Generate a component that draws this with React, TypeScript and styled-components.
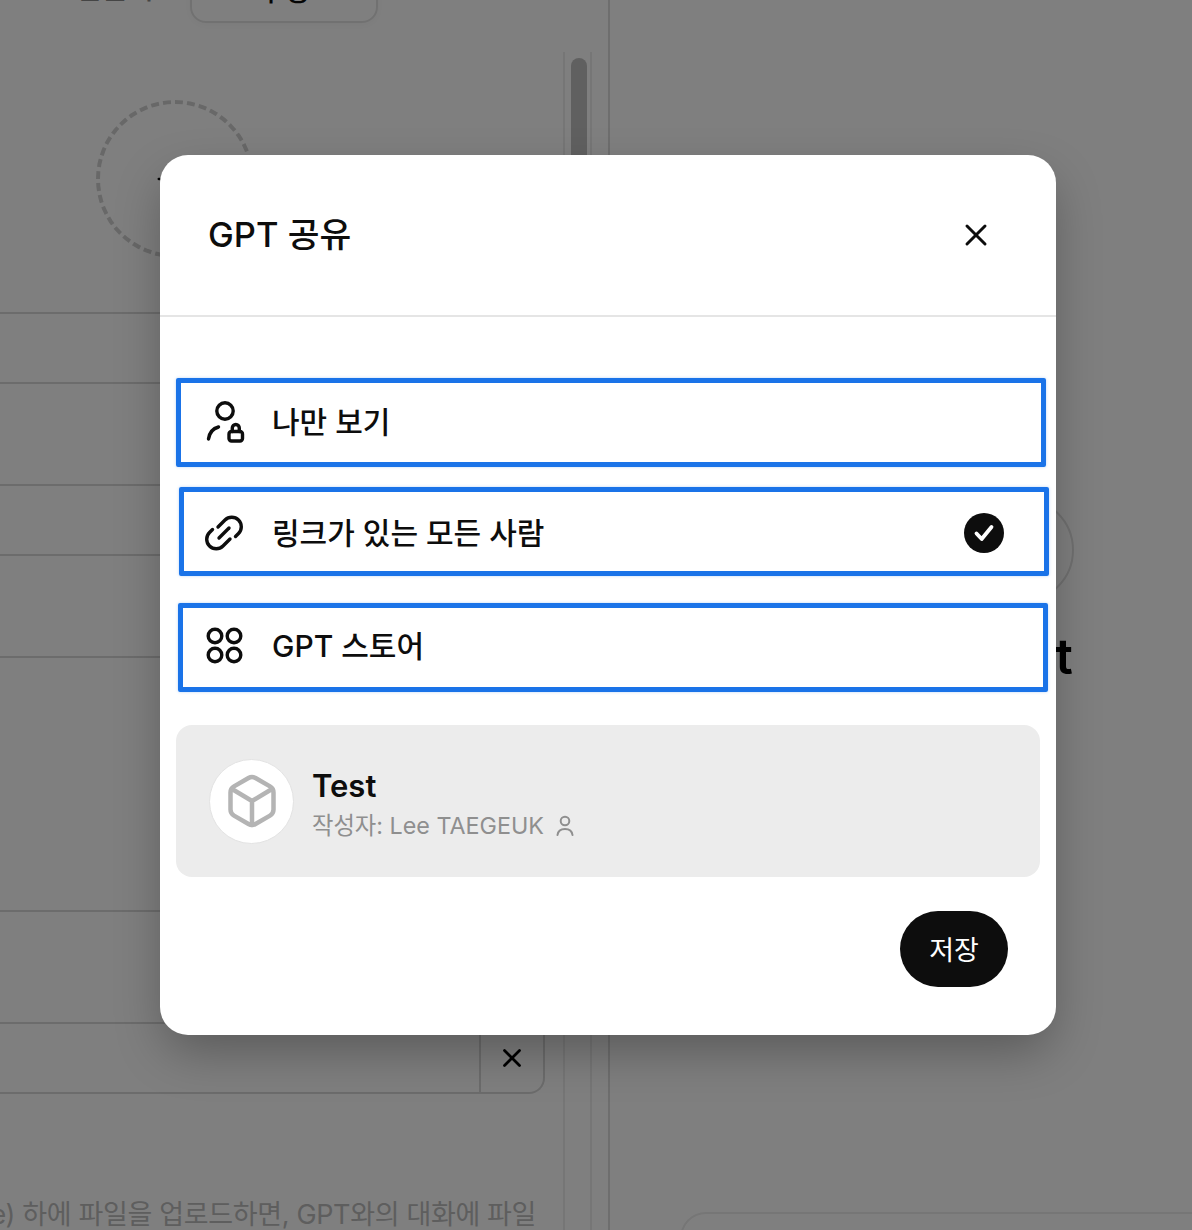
import { Plus, X } from 'lucide-react';
import styled, { createGlobalStyle } from 'styled-components';

const GlobalStyle = createGlobalStyle`
	html, body {
		margin: 0;
		padding: 0;
		background: #fff;
	}
	body {
		font-family: Inter, 'Noto Sans CJK KR', sans-serif;
		color: #0d0d0d;
	}
	* {
		box-sizing: border-box;
	}
`

const PersonLockIcon = () => (
	<svg width='40' height='42' viewBox='0 0 40 42' fill='none' stroke='#0d0d0d' strokeWidth='3.400' strokeLinecap='round'>
		<circle cx='20' cy='10' r='8.200' />
		<path d='M3.500 38c.8-6 4.500-10.500 10-12' />
		<rect x='24' y='30.500' width='13.500' height='9.500' rx='2.500' />
		<path d='M27.300 30.500v-3.500a3.500 3.500 0 0 1 7 0v3.500' />
	</svg>
)

const LinkIcon = () => (
	<svg width='40' height='40' viewBox='1 0 40 40' fill='none' stroke='#0d0d0d' strokeWidth='3.400' strokeLinecap='round'>
		<path d='M14 14l7-7a9.500 9.500 0 0 1 13.500 13.500l-3 3' />
		<path d='M26 26l-7 7a9.500 9.500 0 0 1-13.500-13.500l3-3' />
		<path d='M15 25l10-10' />
	</svg>
)

const StoreIcon = () => (
	<svg width='40' height='40' viewBox='1 1 40 40' fill='none' stroke='#0d0d0d' strokeWidth='3.400'>
		<circle cx='11' cy='11' r='6.800' />
		<circle cx='30' cy='11' r='6.800' />
		<circle cx='11' cy='30' r='6.800' />
		<circle cx='30' cy='30' r='6.800' />
	</svg>
)

const CheckBadge = () => (
	<svg width='40' height='40' viewBox='0 0 40 40'>
		<circle cx='20' cy='20' r='20' fill='#0d0d0d' />
		<path d='M12.500 20.500l5.200 5.500 9.800-12' fill='none' stroke='#fff' strokeWidth='3.800' strokeLinecap='round' strokeLinejoin='round' />
	</svg>
)

const CubeIcon = () => (
	<svg width='48' height='54' viewBox='0 0 48 54' fill='none' stroke='#b4b4b4' strokeWidth='4.500' strokeLinejoin='round' strokeLinecap='round'>
		<path d='M20.500 4l-14.500 8.400q-3.500 2-3.500 6v17.200q0 4 3.500 6l14.500 8.400q3.500 2 7 0l14.500-8.400q3.500-2 3.500-6v-17.200q0-4-3.500-6l-14.500-8.400q-3.500-2-7 0z' />
		<path d='M4 15l20 12 20-12M24 27v24' />
	</svg>
)

const SmallPersonIcon = () => (
	<svg width='18' height='22' viewBox='0 0 18 22' fill='none' stroke='#8f8f8f' strokeWidth='2' strokeLinecap='round'>
		<circle cx='9' cy='6' r='4.300' />
		<path d='M1.500 20c.5-4 3.500-6 7.500-6s7 2 7.500 6' />
	</svg>
)

const App = () => {
	return (
		<Page>
			<GlobalStyle />
			<LeftPanel>
				<TabRow>
					<PlainTab>만들기</PlainTab>
					<ActiveTab>구성</ActiveTab>
				</TabRow>
				<ScrollArea>
					<FormColumn>
						<ImageSlot>
							<Plus size={56} strokeWidth={1} color='#000' />
						</ImageSlot>
						<Field $height={72} $gap={54} />
						<Field $height={72} $gap={100} />
						<Field $height={256} $gap={100} />
						<Field $height={112} $joined />
						<StarterField>
							<RemoveCell>
								<X size={30} strokeWidth={2.200} color='#000' />
							</RemoveCell>
						</StarterField>
						<Caption>(file) 하에 파일을 업로드하면, GPT와의 대화에 파일</Caption>
					</FormColumn>
					<ScrollTrack>
						<ScrollThumb />
					</ScrollTrack>
				</ScrollArea>
			</LeftPanel>
			<RightPanel>
				<PreviewTitle>미리 보기</PreviewTitle>
				<PreviewAvatar />
				<PreviewName>Test</PreviewName>
				<PreviewInput />
			</RightPanel>

			<Overlay>
				<Modal>
					<ModalHeader>
						<ModalTitle>GPT 공유</ModalTitle>
						<CloseButton>
							<X size={36} strokeWidth={2} color='#0d0d0d' />
						</CloseButton>
					</ModalHeader>
					<ModalBody>
						<Option $shift={0} $gap={0} $nudge={-1}>
							<OptionIcon><PersonLockIcon /></OptionIcon>
							<OptionLabel>나만 보기</OptionLabel>
						</Option>
						<Option $shift={3} $gap={20} $nudge={1}>
							<OptionIcon><LinkIcon /></OptionIcon>
							<OptionLabel>링크가 있는 모든 사람</OptionLabel>
							<CheckBadge />
						</Option>
						<Option $shift={2} $gap={27} $nudge={-2}>
							<OptionIcon><StoreIcon /></OptionIcon>
							<OptionLabel>GPT 스토어</OptionLabel>
						</Option>
						<GptCard>
							<GptAvatar><CubeIcon /></GptAvatar>
							<GptInfo>
								<GptName>Test</GptName>
								<GptAuthor>작성자: Lee TAEGEUK <SmallPersonIcon /></GptAuthor>
							</GptInfo>
						</GptCard>
						<ModalFooter>
							<SaveButton>저장</SaveButton>
						</ModalFooter>
					</ModalBody>
				</Modal>
			</Overlay>
		</Page>
	)
}

export default App

const Page = styled.div`
	position: relative;
	width: 1192px;
	height: 1230px;
	display: flex;
	overflow: hidden;
	background: #fff;
`

const LeftPanel = styled.section`
	flex: 0 0 610px;
	height: 1230px;
	border-right: 2px solid #dcdcdc;
	display: flex;
	flex-direction: column;
`

const TabRow = styled.div`
	height: 60px;
	margin-top: -37px;
	display: flex;
	align-items: center;
	padding-left: 40px;
	flex-shrink: 0;
`

const PlainTab = styled.div`
	width: 150px;
	margin-bottom: 8px;
	font-size: 28px;
	line-height: 40px;
	text-align: center;
	font-weight: 500;
	color: #8a8a8a;
`

const ActiveTab = styled(PlainTab)`
	width: 188px;
	height: 60px;
	margin-bottom: 0;
	line-height: 52px;
	color: #0d0d0d;
	border: 2px solid #e3e3e3;
	border-radius: 16px;
	box-shadow: 0 2px 10px rgba(0, 0, 0, 0.04);
`

const ScrollArea = styled.div`
	flex: 1;
	min-height: 0;
	margin-top: 29px;
	display: flex;
	gap: 18px;
	overflow: hidden;
`

const FormColumn = styled.div`
	width: 545px;
	flex-shrink: 0;
	display: flex;
	flex-direction: column;
	padding-top: 48px;
`

const ImageSlot = styled.div`
	width: 158px;
	height: 158px;
	margin-left: 96px;
	border: 4px dashed #d0d0d0;
	border-radius: 50%;
	display: flex;
	align-items: center;
	justify-content: center;
	flex-shrink: 0;
`

const Field = styled.div<{ $height: number; $gap?: number; $joined?: boolean }>`
	height: ${(props) => props.$height}px;
	margin-top: ${(props) => props.$gap ?? 0}px;
	flex-shrink: 0;
	border-top: ${(props) => (props.$joined ? 'none' : '2px solid #d9d9d9')};
	border-bottom: 2px solid #d9d9d9;
	border-right: 2px solid #d9d9d9;
`

const StarterField = styled.div`
	height: 70px;
	flex-shrink: 0;
	display: flex;
	justify-content: flex-end;
	border-bottom: 2px solid #d9d9d9;
	border-right: 2px solid #d9d9d9;
	border-radius: 0 0 16px 0;
`

const RemoveCell = styled.div`
	width: 64px;
	border-left: 2px solid #d9d9d9;
	display: flex;
	align-items: center;
	justify-content: center;
`

const Caption = styled.p`
	margin: 101px 0 0 -41px;
	white-space: nowrap;
	font-size: 27px;
	line-height: 40px;
	letter-spacing: -0.35px;
	color: #bcbcbc;
`

const ScrollTrack = styled.div`
	width: 29px;
	flex-shrink: 0;
	padding: 6px 6px 0;
	border-left: 2px solid #ececec;
	border-right: 2px solid #ececec;
`

const ScrollThumb = styled.div`
	width: 16px;
	height: 400px;
	border-radius: 8px;
	background: #c0c0c0;
`

const RightPanel = styled.section`
	flex: 0 0 822px;
	height: 1230px;
	display: flex;
	flex-direction: column;
	align-items: center;
`

const PreviewTitle = styled.h2`
	margin: -36px 0 0;
	font-size: 32px;
	line-height: 40px;
	font-weight: 500;
	color: #000;
`

const PreviewAvatar = styled.div`
	width: 106px;
	height: 106px;
	margin-top: 493px;
	border: 2px solid #e0e0e0;
	border-radius: 50%;
	flex-shrink: 0;
`

const PreviewName = styled.div`
	margin-top: 26px;
	margin-left: 2px;
	font-size: 49px;
	line-height: 56px;
	font-weight: 600;
	color: #000;
`

const PreviewInput = styled.div`
	width: 682px;
	height: 90px;
	margin-top: 527px;
	border: 2px solid #ececec;
	border-radius: 26px;
	flex-shrink: 0;
`

const Overlay = styled.div`
	position: absolute;
	inset: 0;
	background: rgba(0, 0, 0, 0.5);
	padding: 155px 0 0 160px;
`

const Modal = styled.div`
	width: 896px;
	height: 880px;
	background: #fff;
	border-radius: 28px;
	box-shadow: 0 20px 50px -5px rgba(0, 0, 0, 0.3);
	display: flex;
	flex-direction: column;
`

const ModalHeader = styled.header`
	height: 162px;
	padding: 0 60px 0 48px;
	border-bottom: 2px solid #e5e5e5;
	display: flex;
	align-items: center;
	justify-content: space-between;
	flex-shrink: 0;
`

const ModalTitle = styled.h1`
	margin: 0;
	font-size: 34.500px;
	line-height: 44px;
	font-weight: 500;
	color: #0d0d0d;
`

const CloseButton = styled.button`
	width: 40px;
	height: 40px;
	padding: 0;
	border: none;
	background: none;
	display: flex;
	align-items: center;
	justify-content: center;
`

const ModalBody = styled.div`
	flex: 1;
	padding: 61px 16px 0;
	display: flex;
	flex-direction: column;
`

const Option = styled.div<{ $shift: number; $gap: number; $nudge: number }>`
	width: 870px;
	height: 89px;
	margin-left: ${(props) => props.$shift}px;
	margin-top: ${(props) => props.$gap}px;
	padding: ${(props) => Math.max(props.$nudge * 2, 0)}px 40px ${(props) => Math.max(-props.$nudge * 2, 0)}px ${(props) => 24 - props.$shift}px;
	border: 5px solid #1a73e8;
	border-radius: 2px;
	display: flex;
	align-items: center;
	flex-shrink: 0;
	box-shadow: 0 0 3px rgba(26, 115, 232, 0.3);
`

const OptionIcon = styled.div`
	width: 40px;
	height: 42px;
	display: flex;
	align-items: center;
	justify-content: center;
	margin-right: 27px;
`

const OptionLabel = styled.div`
	flex: 1;
	font-size: 30px;
	line-height: 40px;
	font-weight: 500;
	color: #0d0d0d;
`

const GptCard = styled.div`
	width: 864px;
	height: 152px;
	margin-top: 33px;
	padding-left: 33px;
	border-radius: 16px;
	background: #ececec;
	display: flex;
	align-items: center;
	gap: 18px;
	flex-shrink: 0;
`

const GptAvatar = styled.div`
	width: 85px;
	height: 85px;
	border-radius: 50%;
	background: #fff;
	border: 1px solid #e3e3e3;
	display: flex;
	align-items: center;
	justify-content: center;
	flex-shrink: 0;
`

const GptInfo = styled.div`
	padding-top: 9px;
	display: flex;
	flex-direction: column;
`

const GptName = styled.div`
	margin-bottom: 4px;
	font-size: 31px;
	line-height: 36px;
	font-weight: 600;
	color: #0d0d0d;
`

const GptAuthor = styled.div`
	font-size: 23.300px;
	line-height: 36px;
	color: #8f8f8f;
	display: flex;
	align-items: center;
	gap: 12px;
`

const ModalFooter = styled.div`
	margin-top: 34px;
	padding-right: 32px;
	display: flex;
	justify-content: flex-end;
`

const SaveButton = styled.button`
	width: 108px;
	height: 76px;
	padding: 0 0 2px;
	border: none;
	border-radius: 38px;
	background: #0d0d0d;
	color: #fff;
	font-family: inherit;
	font-size: 27px;
	font-weight: 400;
`
